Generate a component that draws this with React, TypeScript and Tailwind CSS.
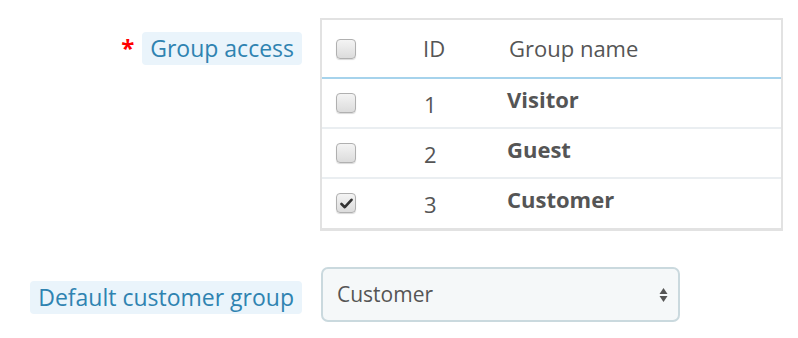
import React from "react";

const groups = [
  { id: 1, name: "Visitor", checked: false },
  { id: 2, name: "Guest", checked: false },
  { id: 3, name: "Customer", checked: true },
];

const Checkbox = ({ checked }: { checked?: boolean }) => (
  <div className="w-[20px] h-[20px] rounded-[4px] border border-[#b0b0b0] bg-gradient-to-b from-[#f4f4f4] to-[#dcdcdc] shadow-[0_1px_1px_rgba(0,0,0,0.15)] flex items-center justify-center">
    {checked && (
      <svg width="13" height="11" viewBox="0 0 13 11">
        <path d="M1.5 6 L4.8 9.2 L11.5 1.8" fill="none" stroke="#333" strokeWidth="2.6" strokeLinecap="round" strokeLinejoin="round" />
      </svg>
    )}
  </div>
);

const Label = ({ children }: { children: React.ReactNode }) => (
  <span className="bg-[#eaf4fb] text-[#2f83b1] rounded-[4px] px-[8px] h-[33px] flex items-center text-[23px]">
    {children}
  </span>
);

export default function App() {
  return (
    <div className="w-[798px] h-[338px] bg-white font-['Open_Sans',sans-serif] pt-[18px]">
      {/* Group access */}
      <div className="flex">
        <div className="w-[302px] flex justify-end items-start pt-[14px] gap-[8px]">
          <span className="text-[#f00] text-[24px] font-bold leading-none mt-[4px]">*</span>
          <Label>Group access</Label>
        </div>
        <div className="ml-[18px] w-[463px] border-2 border-[#e2e2e2] border-b-[3px] text-[#555] text-[22px]">
          <div className="flex h-[59px] items-center border-b-2 border-[#a6d3ec]">
            <div className="w-[101px] pl-[14px]">
              <Checkbox />
            </div>
            <div className="w-[86px]">ID</div>
            <div>Group name</div>
          </div>
          {groups.map((g) => (
            <div key={g.id} className="flex h-[50px] border-b-2 border-[#eaeef1] last:border-b-0 last:h-[49px]">
              <div className="w-[102px] pl-[14px] pt-[14px]">
                <Checkbox checked={g.checked} />
              </div>
              <div className="w-[83px] pt-[9px]">{g.id}</div>
              <div className="font-bold pt-[4px]">{g.name}</div>
            </div>
          ))}
        </div>
      </div>

      {/* Default customer group */}
      <div className="flex mt-[36px]">
        <div className="w-[302px] flex justify-end items-start pt-[14px]">
          <Label>Default customer group</Label>
        </div>
        <div className="ml-[19px] w-[359px] h-[55px] rounded-[7px] border-2 border-[#cad9de] bg-[#f5f8f9] flex items-center justify-between pl-[14px] pr-[10px] text-[#555] text-[21px]">
          <span>Customer</span>
          <svg width="9" height="16" viewBox="0 0 9 16">
            <path d="M4.5 1 L8.5 7 L0.5 7 Z" fill="#555" />
            <path d="M4.5 15 L8.5 9 L0.5 9 Z" fill="#555" />
          </svg>
        </div>
      </div>
    </div>
  );
}
